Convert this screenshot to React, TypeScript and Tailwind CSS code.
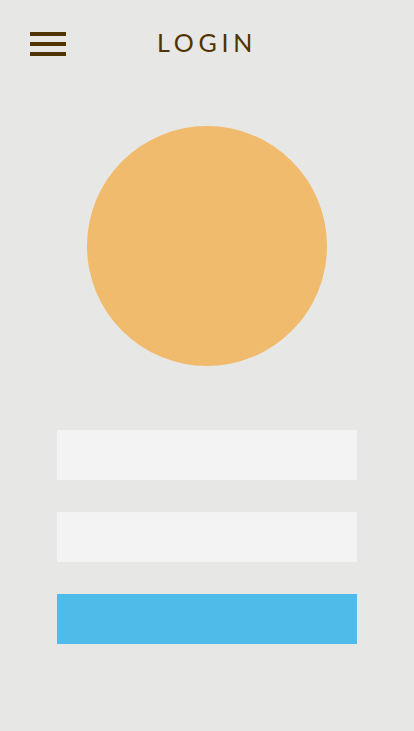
export default function App() {
  return (
    <div className="min-h-[731px] w-full bg-[#e7e7e5] font-['Lato',sans-serif]">
      <header className="relative h-[88px]">
        <div className="absolute left-[30px] top-[32px] flex w-[36px] flex-col gap-[6px]">
          <span className="h-[4px] bg-[#4f3300]" />
          <span className="h-[4px] bg-[#4f3300]" />
          <span className="h-[4px] bg-[#4f3300]" />
        </div>
        <h1 className="pt-[27px] text-center text-[25px] leading-[30px] tracking-[0.19em] text-[#4f3300]">
          LOGIN
        </h1>
      </header>
      <div className="flex justify-center pt-[38px]">
        <div className="h-[240px] w-[240px] rounded-full bg-[#f0bb6c]" />
      </div>
      <div className="mx-auto mt-[64px] flex w-[300px] flex-col gap-[32px]">
        <input className="h-[50px] w-full bg-[#f3f3f3] outline-none" />
        <input type="password" className="h-[50px] w-full bg-[#f3f3f3] outline-none" />
        <button className="h-[50px] w-full bg-[#4fbbe8]" />
      </div>
    </div>
  );
}
